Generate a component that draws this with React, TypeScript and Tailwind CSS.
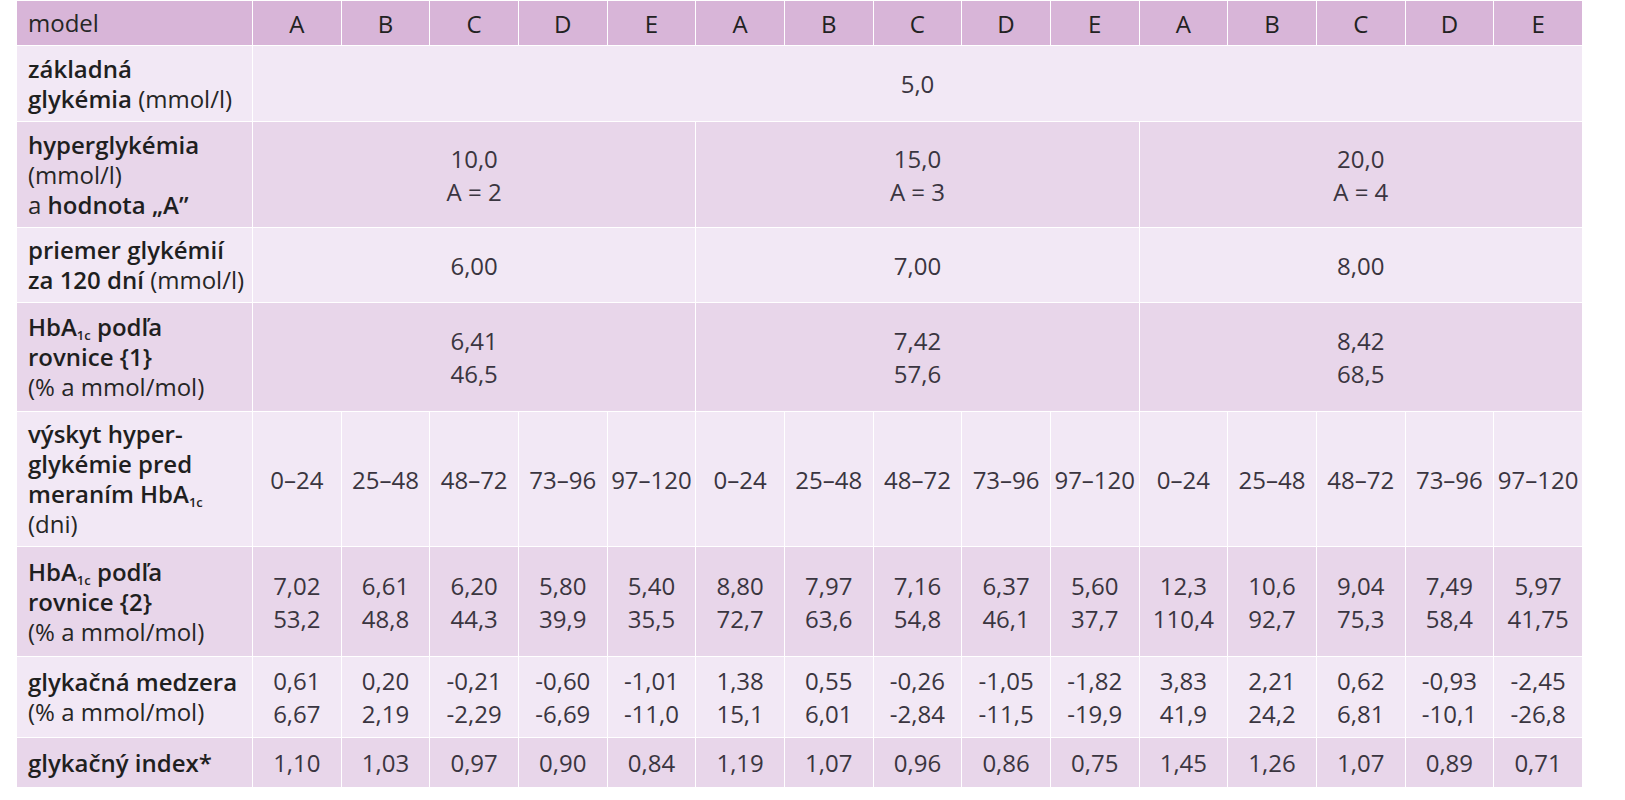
const LIGHT = "bg-[#f2e8f5]";
const MID = "bg-[#e8d6ea]";

const RANGES = ["0–24", "25–48", "48–72", "73–96", "97–120"];

const HBA2 = [
  ["7,02", "53,2"], ["6,61", "48,8"], ["6,20", "44,3"], ["5,80", "39,9"], ["5,40", "35,5"],
  ["8,80", "72,7"], ["7,97", "63,6"], ["7,16", "54,8"], ["6,37", "46,1"], ["5,60", "37,7"],
  ["12,3", "110,4"], ["10,6", "92,7"], ["9,04", "75,3"], ["7,49", "58,4"], ["5,97", "41,75"],
];

const GAP = [
  ["0,61", "6,67"], ["0,20", "2,19"], ["-0,21", "-2,29"], ["-0,60", "-6,69"], ["-1,01", "-11,0"],
  ["1,38", "15,1"], ["0,55", "6,01"], ["-0,26", "-2,84"], ["-1,05", "-11,5"], ["-1,82", "-19,9"],
  ["3,83", "41,9"], ["2,21", "24,2"], ["0,62", "6,81"], ["-0,93", "-10,1"], ["-2,45", "-26,8"],
];

const INDEX = ["1,10", "1,03", "0,97", "0,90", "0,84", "1,19", "1,07", "0,96", "0,86", "0,75", "1,45", "1,26", "1,07", "0,89", "0,71"];

const label = "border border-white pl-[11px] pr-1 text-left align-middle leading-[30px] text-[#262626]";
const cell = "border border-white px-0 text-center align-middle leading-[33px] text-[#3a3540]";
const B = "font-semibold text-[#1f1f1f]";

function Sub({ children }: { children: string }) {
  return <sub className="text-[13px] bottom-[-4px] font-semibold">{children}</sub>;
}

export default function App() {
  return (
    <div className="min-h-screen bg-white" style={{ fontFamily: '"Open Sans", "Noto Sans", sans-serif' }}>
      <table className="ml-[16px] w-[1567px] table-fixed border-collapse text-[24px]">
        <colgroup>
          <col className="w-[236px]" />
          {Array.from({ length: 15 }).map((_, i) => (
            <col key={i} />
          ))}
        </colgroup>
        <tbody>
          <tr className="h-[45px] bg-[#d8b5d8]">
            <td className={`${label} text-[#222]`}>model</td>
            {[0, 1, 2].flatMap((g) =>
              ["A", "B", "C", "D", "E"].map((l) => (
                <td key={`${g}${l}`} className={`${cell} text-[#222]`}>
                  {l}
                </td>
              ))
            )}
          </tr>

          <tr className={`h-[76px] ${LIGHT}`}>
            <td className={label}>
              <span className={B}>základná</span>
              <br />
              <span className={B}>glykémia</span> (mmol/l)
            </td>
            <td colSpan={15} className={cell}>5,0</td>
          </tr>

          <tr className={`h-[106px] ${MID}`}>
            <td className={label}>
              <span className={B}>hyperglykémia</span>
              <br />
              (mmol/l)
              <br />a <span className={B}>hodnota „A”</span>
            </td>
            {["10,0|A = 2", "15,0|A = 3", "20,0|A = 4"].map((v) => (
              <td key={v} colSpan={5} className={`${cell} leading-[31px]`}>
                {v.split("|")[0]}
                <br />
                {v.split("|")[1]}
              </td>
            ))}
          </tr>

          <tr className={`h-[75px] ${LIGHT}`}>
            <td className={label}>
              <span className={B}>priemer glykémií</span>
              <br />
              <span className={B}>za 120 dní</span> (mmol/l)
            </td>
            {["6,00", "7,00", "8,00"].map((v) => (
              <td key={v} colSpan={5} className={cell}>{v}</td>
            ))}
          </tr>

          <tr className={`h-[109px] ${MID}`}>
            <td className={label}>
              <span className={B}>
                HbA<Sub>1c</Sub> podľa
              </span>
              <br />
              <span className={B}>rovnice {"{1}"}</span>
              <br />
              (% a mmol/mol)
            </td>
            {["6,41|46,5", "7,42|57,6", "8,42|68,5"].map((v) => (
              <td key={v} colSpan={5} className={cell}>
                {v.split("|")[0]}
                <br />
                {v.split("|")[1]}
              </td>
            ))}
          </tr>

          <tr className={`h-[135px] ${LIGHT}`}>
            <td className={label}>
              <span className={B}>výskyt hyper-</span>
              <br />
              <span className={B}>glykémie pred</span>
              <br />
              <span className={B}>
                meraním HbA<Sub>1c</Sub>
              </span>
              <br />
              (dni)
            </td>
            {[0, 1, 2].flatMap((g) =>
              RANGES.map((r) => (
                <td key={`${g}${r}`} className={`${cell} whitespace-nowrap`}>{r}</td>
              ))
            )}
          </tr>

          <tr className={`h-[110px] ${MID}`}>
            <td className={label}>
              <span className={B}>
                HbA<Sub>1c</Sub> podľa
              </span>
              <br />
              <span className={B}>rovnice {"{2}"}</span>
              <br />
              (% a mmol/mol)
            </td>
            {HBA2.map(([a, b], i) => (
              <td key={i} className={cell}>
                {a}
                <br />
                {b}
              </td>
            ))}
          </tr>

          <tr className={`h-[81px] ${LIGHT}`}>
            <td className={label}>
              <span className={B}>glykačná medzera</span>
              <br />
              (% a mmol/mol)
            </td>
            {GAP.map(([a, b], i) => (
              <td key={i} className={cell}>
                {a}
                <br />
                {b}
              </td>
            ))}
          </tr>

          <tr className={`h-[50px] ${MID}`}>
            <td className={label}>
              <span className={B}>glykačný index*</span>
            </td>
            {INDEX.map((v, i) => (
              <td key={i} className={cell}>{v}</td>
            ))}
          </tr>
        </tbody>
      </table>
    </div>
  );
}
